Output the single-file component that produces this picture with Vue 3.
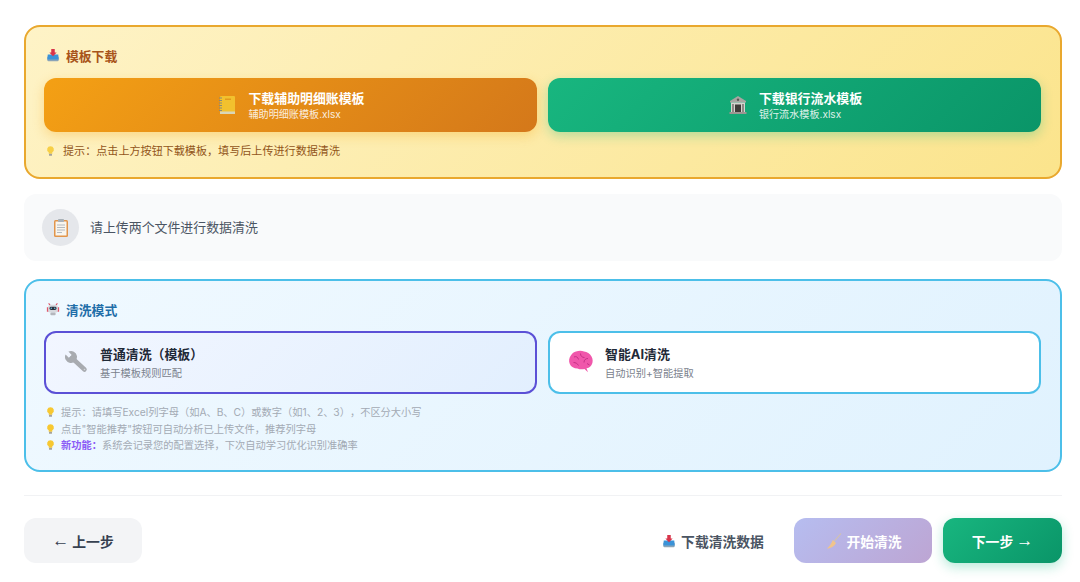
<script setup>
const hints = [
  { text: '提示：请填写Excel列字母（如A、B、C）或数字（如1、2、3），不区分大小写' },
  { text: '点击"智能推荐"按钮可自动分析已上传文件，推荐列字母' },
  { label: '新功能：', text: '系统会记录您的配置选择，下次自动学习优化识别准确率' }
]
</script>

<template>
  <main class="page">
    <section class="panel panel-amber">
      <h2 class="panel-title amber-title">
        <svg class="ico-16" viewBox="0 0 16 16"><path d="M1.500 10h13v3.600q0 1.400-1.400 1.400H2.900q-1.400 0-1.400-1.400z" fill="#8aa4b8"/><path d="M2 7.500h12l.5 5.500h-13z" fill="#3b93d8"/><path d="M6 1h4v4h2.200L8 9.500 3.800 5H6z" fill="#d8344a"/></svg>
        模板下载
      </h2>
      <div class="btn-row">
        <button class="dl-btn dl-orange">
          <svg class="ico-20" viewBox="0 0 20 20"><rect x="3" y="1" width="15" height="18" rx="1" fill="#f2c12e"/><rect x="3" y="16.500" width="15" height="2.500" fill="#d9d6b8"/><rect x="8" y="3.500" width="6" height="1.500" fill="#e39a1c"/><path d="M2 3h3M2 5.500h3M2 8h3M2 10.500h3M2 13h3M2 15.500h3" stroke="#8a8a7a" stroke-width="1"/></svg>
          <span class="dl-text"><strong>下载辅助明细账模板</strong><small>辅助明细账模板.xlsx</small></span>
        </button>
        <button class="dl-btn dl-green">
          <svg class="ico-20" viewBox="0 0 20 20"><path d="M10 1 18 6v1.500H2V6z" fill="#a9a5a2"/><rect x="3" y="7.500" width="14" height="9.500" fill="#d6d3cf"/><rect x="7" y="9.500" width="6" height="7.500" fill="#3f3a38"/><rect x="4" y="9" width="2" height="8" fill="#8d8884"/><rect x="14" y="9" width="2" height="8" fill="#8d8884"/><rect x="1.500" y="17" width="17" height="2" fill="#9b9692"/><circle cx="10" cy="4.800" r="1.200" fill="#5c5755"/></svg>
          <span class="dl-text"><strong>下载银行流水模板</strong><small>银行流水模板.xlsx</small></span>
        </button>
      </div>
      <p class="amber-hint">
        <svg class="ico-bulb" viewBox="0 0 12 14"><path d="M6 .5a4.500 4.500 0 0 0-2.400 8.300V10.500h4.800V8.800A4.500 4.500 0 0 0 6 .5z" fill="#f7cf45"/><rect x="4" y="10.800" width="4" height="2.500" rx=".8" fill="#a5a29a"/></svg>
        提示：点击上方按钮下载模板，填写后上传进行数据清洗
      </p>
    </section>

    <section class="status">
      <span class="status-circle">
        <svg class="ico-20" viewBox="0 0 20 20"><rect x="3" y="2" width="14" height="17" rx="1.500" fill="#e2954a"/><rect x="4.500" y="3.500" width="11" height="14" fill="#f8f5ee"/><path d="M6 7h8M6 9.500h8M6 12h8M6 14.500h5" stroke="#b4bac0" stroke-width="1"/><rect x="7" y="1" width="6" height="3" rx=".8" fill="#a9b1b8"/></svg>
      </span>
      <span class="status-text">请上传两个文件进行数据清洗</span>
    </section>

    <section class="panel panel-blue">
      <h2 class="panel-title blue-title">
        <svg class="ico-16" viewBox="0 0 16 16"><path d="M1 6h2v5H1zM13 6h2v5h-2z" fill="#e0566a"/><path d="M3 1.500 5 4M13 1.500 11 4" stroke="#d9485c" stroke-width="1.200"/><rect x="2.500" y="3" width="11" height="9" rx="3" fill="#d7d9de"/><rect x="4" y="5.500" width="8" height="3.500" rx="1.700" fill="#2d3340"/><circle cx="6" cy="7.200" r=".8" fill="#6fd0f0"/><circle cx="10" cy="7.200" r=".8" fill="#6fd0f0"/><rect x="5" y="12" width="6" height="3" rx="1" fill="#b4b7bd"/></svg>
        清洗模式
      </h2>
      <div class="btn-row">
        <button class="mode mode-active">
          <svg class="ico-24" viewBox="0 0 25 25"><path d="M4.410 1.590 7.700 4.880 4.880 7.700 1.590 4.410A6 6 0 1 0 4.410 1.590z" fill="#a8abb0"/><path d="M8 8 20.500 19.500" stroke="#a8abb0" stroke-width="4.500" stroke-linecap="round"/><circle cx="20.500" cy="19.500" r=".8" fill="#d2d5d9"/></svg>
          <span class="mode-text"><strong>普通清洗（模板）</strong><small>基于模板规则匹配</small></span>
        </button>
        <button class="mode">
          <svg class="ico-brain" viewBox="0 0 26 25"><path d="M8 1.500c3-1.200 6-1 8 0 3 .3 6 2 7.500 5 1.500 2.500 1.700 6 0 8.500-1 2-3 3-5 3.300l1.500 4-3.500-3.300c-2.500.6-5 .4-7-.5C6 18.300 3 17 1.800 14 .5 11.500 1 7.500 3 5.300 4.200 3.400 6 2 8 1.500z" fill="#f057ab"/><path d="M6 7c2-1 4 0 4.500 2.500M12.500 3.500c0 2.500 1.500 4 4 4M20 8.500c-2.500 0-4 1.500-4 4M5.500 12.500c2 0 4 1 5 3M19 13.500l2.500 1.500" stroke="#c02c82" stroke-width=".9" fill="none"/></svg>
          <span class="mode-text"><strong>智能AI清洗</strong><small>自动识别+智能提取</small></span>
        </button>
      </div>
      <ul class="hints">
        <li v-for="hint in hints" :key="hint.text">
          <svg class="ico-bulb" viewBox="0 0 12 14"><path d="M6 .5a4.500 4.500 0 0 0-2.400 8.300V10.500h4.800V8.800A4.500 4.500 0 0 0 6 .5z" fill="#f7c831"/><rect x="4" y="10.800" width="4" height="2.500" rx=".8" fill="#a5a29a"/></svg>
          <span><b v-if="hint.label">{{ hint.label }}</b>{{ hint.text }}</span>
        </li>
      </ul>
    </section>

    <footer class="footer">
      <button class="nav nav-back"><span class="arrow">←</span> 上一步</button>
      <div class="footer-right">
        <button class="nav nav-plain">
          <svg class="ico-16" viewBox="0 0 16 16"><path d="M1.500 10h13v3.600q0 1.400-1.400 1.400H2.900q-1.400 0-1.400-1.400z" fill="#8aa4b8"/><path d="M2 7.500h12l.5 5.500h-13z" fill="#3b93d8"/><path d="M6 1h4v4h2.200L8 9.500 3.800 5H6z" fill="#d8344a"/></svg>
          下载清洗数据
        </button>
        <button class="nav nav-start">
          <svg class="ico-broom" viewBox="0 0 16 16"><path d="M15 .5 8 8.500" stroke="#d6c3a6" stroke-width="1.100"/><path d="M6.800 7 10 10c-1.500 3-5 5.500-9 5.500C4 13 5.500 10 6.800 7z" fill="#f0c48c"/></svg>
          <span>开始清洗</span>
        </button>
        <button class="nav nav-next">下一步 <span class="arrow">→</span></button>
      </div>
    </footer>
  </main>
</template>

<style scoped>
.page {
  width: 1080px;
  height: 582px;
  box-sizing: border-box;
  padding: 25px 18px 0 24px;
  overflow: hidden;
  background: #fff;
  font-family: "Inter", "Noto Sans CJK SC", sans-serif;
}
button {
  font-family: inherit;
  border: 0;
  cursor: pointer;
}
svg { flex: none; display: block; }
.ico-16 { width: 14px; height: 14px; }
.ico-20 { width: 20px; height: 20px; }
.ico-24 { width: 25px; height: 25px; }
.ico-brain { width: 26px; height: 25px; }
.ico-broom { width: 16px; height: 16px; }
.ico-bulb { width: 9px; height: 12px; }

.panel {
  box-sizing: border-box;
  border: 2px solid;
  border-radius: 16px;
  padding: 18px 19px 0 18px;
}
.panel-amber {
  height: 154px;
  border-color: #e9a82e;
  background: linear-gradient(135deg, #fef3c7, #fbe48c);
}
.panel-blue {
  height: 193px;
  border-color: #4cbfe9;
  background: linear-gradient(135deg, #f0f9ff, #e0f2fe);
}
.panel-title {
  display: flex;
  align-items: center;
  gap: 6px;
  height: 20px;
  margin: 0 0 13px 2px;
  font-size: 12.800px;
  font-weight: 700;
}
.amber-title { color: #a8541a; }
.blue-title { margin-bottom: 12px; color: #1f6ea8; }
.btn-row {
  display: grid;
  grid-template-columns: 1fr 1fr;
  gap: 11px;
}
.dl-btn {
  display: flex;
  align-items: center;
  justify-content: center;
  gap: 11px;
  height: 54px;
  padding-left: 7px;
  border-radius: 12px;
  color: #fff;
}
.dl-orange {
  background: linear-gradient(135deg, #f4a014, #d4781a);
  box-shadow: 0 4px 12px rgba(245, 158, 11, .3);
}
.dl-green {
  background: linear-gradient(135deg, #18b67f, #0a9568);
  box-shadow: 0 4px 12px rgba(16, 185, 129, .3);
}
.dl-text {
  display: flex;
  flex-direction: column;
  align-items: flex-start;
}
.dl-text strong { font-size: 12.900px; line-height: 18px; }
.dl-text small { margin-top: -1px; font-size: 10.100px; line-height: 14px; opacity: .85; font-weight: 400; }
.amber-hint {
  display: flex;
  align-items: center;
  gap: 8px;
  margin: 11px 0 0 2px;
  font-size: 11.080px;
  line-height: 16px;
  color: #92551a;
}
.status {
  display: flex;
  align-items: center;
  gap: 11px;
  box-sizing: border-box;
  height: 67px;
  margin: 15px 0 18px;
  padding-left: 18px;
  border-radius: 12px;
  background: #f9fafb;
  font-size: 12.920px;
  color: #4b5563;
}
.status-text { position: relative; top: -1px; }
.status-circle {
  display: flex;
  align-items: center;
  justify-content: center;
  width: 37px;
  height: 37px;
  border-radius: 50%;
  background: #e5e7eb;
}
.mode {
  display: flex;
  align-items: center;
  gap: 11px;
  box-sizing: border-box;
  height: 63px;
  padding: 0 18px;
  border: 2px solid #4cbfe9;
  border-radius: 12px;
  background: #fff;
  text-align: left;
}
.mode-active {
  border-color: #5b50d6;
  background: linear-gradient(135deg, #f2f6ff, #e2effe);
}
.mode-text { display: flex; flex-direction: column; padding-top: 2px; }
.mode-text strong { font-size: 12.900px; line-height: 18px; color: #1f2937; }
.mode-text small { margin-top: 1px; font-size: 10.240px; line-height: 16px; color: #7a818c; font-weight: 400; }
.hints {
  margin: 10px 0 0 2px;
  padding: 0;
  list-style: none;
  font-size: 10.240px;
  line-height: 16.500px;
  color: #a3aab4;
  text-spacing-trim: space-all;
}
.hints li { display: flex; align-items: center; gap: 6px; }
.hints b { color: #8b5cf6; font-weight: 700; }
.footer {
  display: flex;
  justify-content: space-between;
  height: 68px;
  margin-top: 23px;
  padding-top: 22px;
  box-sizing: border-box;
  border-top: 1px solid #f1f2f4;
}
.footer-right { display: flex; gap: 11px; }
.nav {
  display: flex;
  align-items: center;
  justify-content: center;
  gap: 6px;
  height: 45px;
  border-radius: 12px;
  font-size: 13.800px;
  font-weight: 700;
}
.arrow { font-family: "Liberation Sans", sans-serif; font-size: 17px; font-weight: 400; }
.nav-back { width: 118px; background: #f3f4f6; color: #374151; gap: 3px; }
.nav-plain { width: 130px; margin-right: 5px; gap: 5px; background: #fff; color: #4b5563; }
.nav-start {
  width: 138px;
  gap: 4px;
  padding-left: 8px;
  color: #fff;
  background: linear-gradient(135deg, #b6bdf0, #bda5d3);
}
.nav-next {
  width: 119px;
  gap: 3px;
  color: #fff;
  background: linear-gradient(135deg, #18b67f, #0a9568);
  box-shadow: 0 4px 12px rgba(16, 185, 129, .3);
}
</style>
